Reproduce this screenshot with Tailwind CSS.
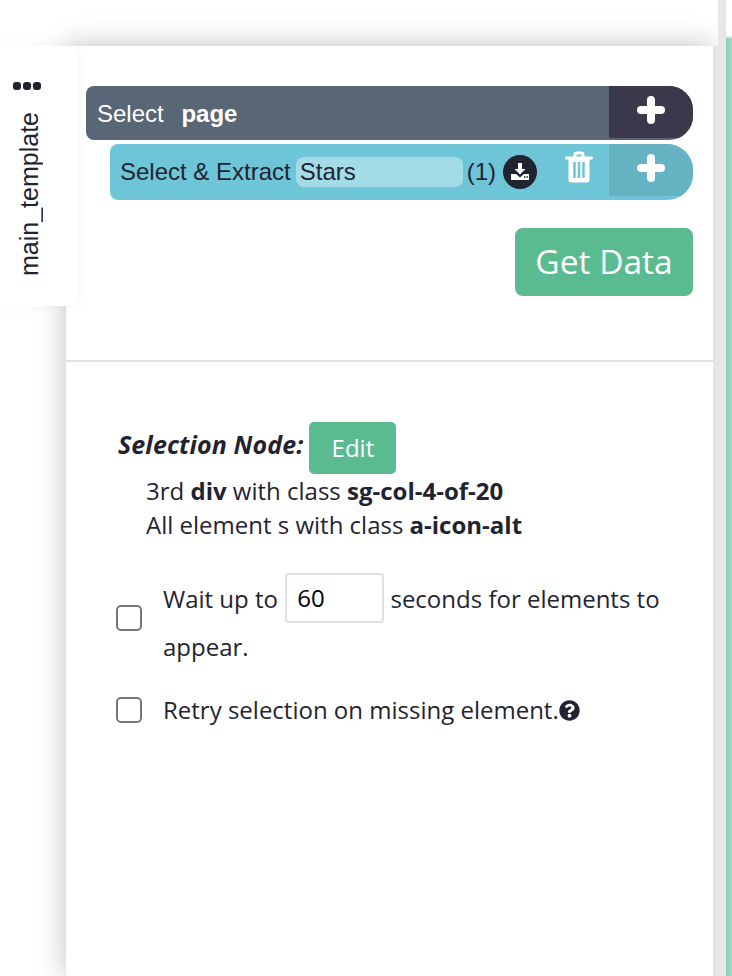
<!DOCTYPE html>
<html>
<head>
<meta charset="utf-8">
<script src="https://cdn.jsdelivr.net/npm/@tailwindcss/browser@4"></script>
</head>
<body class="bg-white">
<div class="relative w-[732px] h-[976px] overflow-hidden bg-white text-[#1f2430] font-['Open_Sans',sans-serif]">

  <!-- right gutter -->
  <div class="absolute top-[46px] bottom-0 left-[713px] w-[5px] z-30 bg-[#e4e5e7]"></div>
  <div class="absolute top-0 bottom-0 left-[718px] w-[8px] z-30 bg-[#e7e7e7]"></div>
  <div class="absolute top-[36px] h-[2px] left-[726px] w-[6px] z-30 bg-[#e4e4e4]"></div>
  <div class="absolute top-[38px] bottom-0 left-[726px] w-[6px] z-30 bg-gradient-to-r from-[#8ccdb5] to-[#a9d9c8]"></div>

  <!-- side tab -->
  <div class="absolute left-0 top-[46px] z-20 w-[78px] h-[260px] bg-white shadow-[0_0_16px_rgba(0,0,0,0.04)] flex flex-col items-start">
    <div class="flex gap-[2px] mt-[36px] ml-[13px]">
      <span class="h-[8px] w-[8px] rounded-[3px] bg-[#1f2430]"></span>
      <span class="h-[8px] w-[8px] rounded-[3px] bg-[#1f2430]"></span>
      <span class="h-[8px] w-[8px] rounded-[3px] bg-[#1f2430]"></span>
    </div>
    <div class="mt-[22px] ml-[14px] [writing-mode:vertical-rl] rotate-180 font-['Liberation_Sans',sans-serif] text-[25px] leading-[30px]">main_template</div>
  </div>

  <!-- main panel -->
  <div class="absolute left-[66px] top-[46px] w-[647px] h-[930px] bg-white shadow-[0_0_28px_rgba(0,0,0,0.25)] z-10">

    <div class="h-[316px] border-b-2 border-[#e0e1e3] flex flex-col items-end pr-[20px] pt-[40px]">
      <!-- select row -->
      <div class="w-[607px] h-[54px] rounded-l-[8px] rounded-r-[24px] bg-[#596676] flex items-center justify-between overflow-hidden font-['Liberation_Sans',sans-serif] text-[24px] text-white">
        <div class="pl-[11px] pt-[2px]">Select <b class="ml-[11px]">page</b></div>
        <div class="w-[84px] h-[52px] self-start bg-[#39394b] flex items-center justify-center pb-[4px]">
          <svg width="28" height="28" viewBox="0 0 28 28"><path d="M14 4v20M4 14h20" stroke="#fff" stroke-width="8" stroke-linecap="round"/></svg>
        </div>
      </div>
      <!-- extract row -->
      <div class="mt-[4px] w-[583px] h-[56px] rounded-l-[8px] rounded-r-[26px] bg-[#6ec5d8] flex items-center overflow-hidden font-['Liberation_Sans',sans-serif] text-[24px]">
        <span class="pl-[10px]">Select &amp; Extract</span>
        <span class="ml-[5px] w-[167px] h-[30px] rounded-[8px] bg-[#a3dbe6] pl-[4px] leading-[30px]">Stars</span>
        <span class="ml-[4px]">(1)</span>
        <span class="ml-[7px] w-[34px] h-[34px] rounded-full bg-[#1f2430] flex items-center justify-center">
          <svg width="20" height="20" viewBox="0 0 20 20"><path d="M8 1h4v6h3.500L10 12.500 4.500 7H8z" fill="#fff"/><path d="M1 12h5l4 3.500 4-3.500h5v6H1z" fill="#fff"/><path d="M14 15h1.500M16.500 15H18" stroke="#1f2430" stroke-width="1.500"/></svg>
        </span>
        <svg class="ml-[28px] mb-[10px]" width="28" height="32" viewBox="0 0 28 32"><path d="M1.500 7h25M10 6V3.500C10 2.500 10.800 2 11.500 2h5c.7 0 1.500.5 1.500 1.500V6" stroke="#fff" stroke-width="3" fill="none" stroke-linecap="round"/><path d="M3.500 7h21v22c0 1.500-1 2.500-2.500 2.500H6C4.500 31.500 3.500 30.500 3.500 29z" fill="#fff"/><path d="M9.500 11v16M14 11v16M18.500 11v16" stroke="#6ec5d8" stroke-width="2.500"/></svg>
        <div class="ml-auto w-[84px] h-[52px] self-start bg-[#65b2c2] flex items-center justify-center pb-[4px]">
          <svg width="28" height="28" viewBox="0 0 28 28"><path d="M14 4v20M4 14h20" stroke="#fff" stroke-width="8" stroke-linecap="round"/></svg>
        </div>
      </div>
      <button class="mt-[28px] w-[178px] h-[68px] rounded-[8px] bg-[#5aba90] text-white text-[33.500px] pb-[2px]">Get Data</button>
    </div>

    <div class="pl-[50px] pt-[60px] text-[24px]">
      <div class="flex items-center h-[52px]">
        <i class="font-bold text-[25px] pb-[6px] ml-[2px] tracking-[0.1px]">Selection Node:</i>
        <button class="ml-[6px] w-[87px] h-[52px] rounded-[5px] bg-[#5aba90] text-white">Edit</button>
      </div>
      <div class="pl-[30px] leading-[34px]">
        <div>3rd <b>div</b> with class <b>sg-col-4-of-20</b></div>
        <div>All element s with class <b>a-icon-alt</b></div>
      </div>

      <div class="mt-[31px] flex items-center">
        <span class="w-[26px] h-[26px] mb-[8px] rounded-[5px] border-2 border-[#767676] bg-white shrink-0"></span>
        <div class="ml-[21px] w-[510px] leading-[48px]">
          Wait up to <span class="inline-block align-[1px] ml-[1px] w-[99px] h-[50px] border-2 border-[#dfe0ea] rounded-[4px] pl-[10px] leading-[46px] text-black">60</span> seconds for elements to appear.
        </div>
      </div>
      <div class="mt-[21px] flex items-center">
        <span class="w-[26px] h-[26px] rounded-[5px] border-2 border-[#767676] bg-white shrink-0"></span>
        <div class="ml-[21px] flex items-center">Retry selection on missing element.
          <svg width="21" height="21" viewBox="0 0 512 512" fill="#1f2430"><path d="M504 256c0 136.997-111.043 248-248 248S8 392.997 8 256C8 119.083 119.043 8 256 8s248 111.083 248 248zM262.655 90c-54.497 0-89.255 22.957-116.549 63.758-3.536 5.286-2.353 12.415 2.715 16.258l34.699 26.31c5.205 3.947 12.621 3.008 16.665-2.122 17.864-22.658 30.113-35.797 57.303-35.797 20.429 0 45.698 13.148 45.698 32.958 0 14.976-12.363 22.667-32.534 33.976C247.128 238.528 216 254.941 216 296v4c0 6.627 5.373 12 12 12h56c6.627 0 12-5.373 12-12v-1.333c0-28.462 83.186-29.647 83.186-106.667 0-58.002-60.165-102-116.531-102zM256 338c-25.365 0-46 20.635-46 46 0 25.364 20.635 46 46 46s46-20.636 46-46c0-25.365-20.635-46-46-46z"/></svg>
        </div>
      </div>
    </div>
  </div>
</div>
</body>
</html>
